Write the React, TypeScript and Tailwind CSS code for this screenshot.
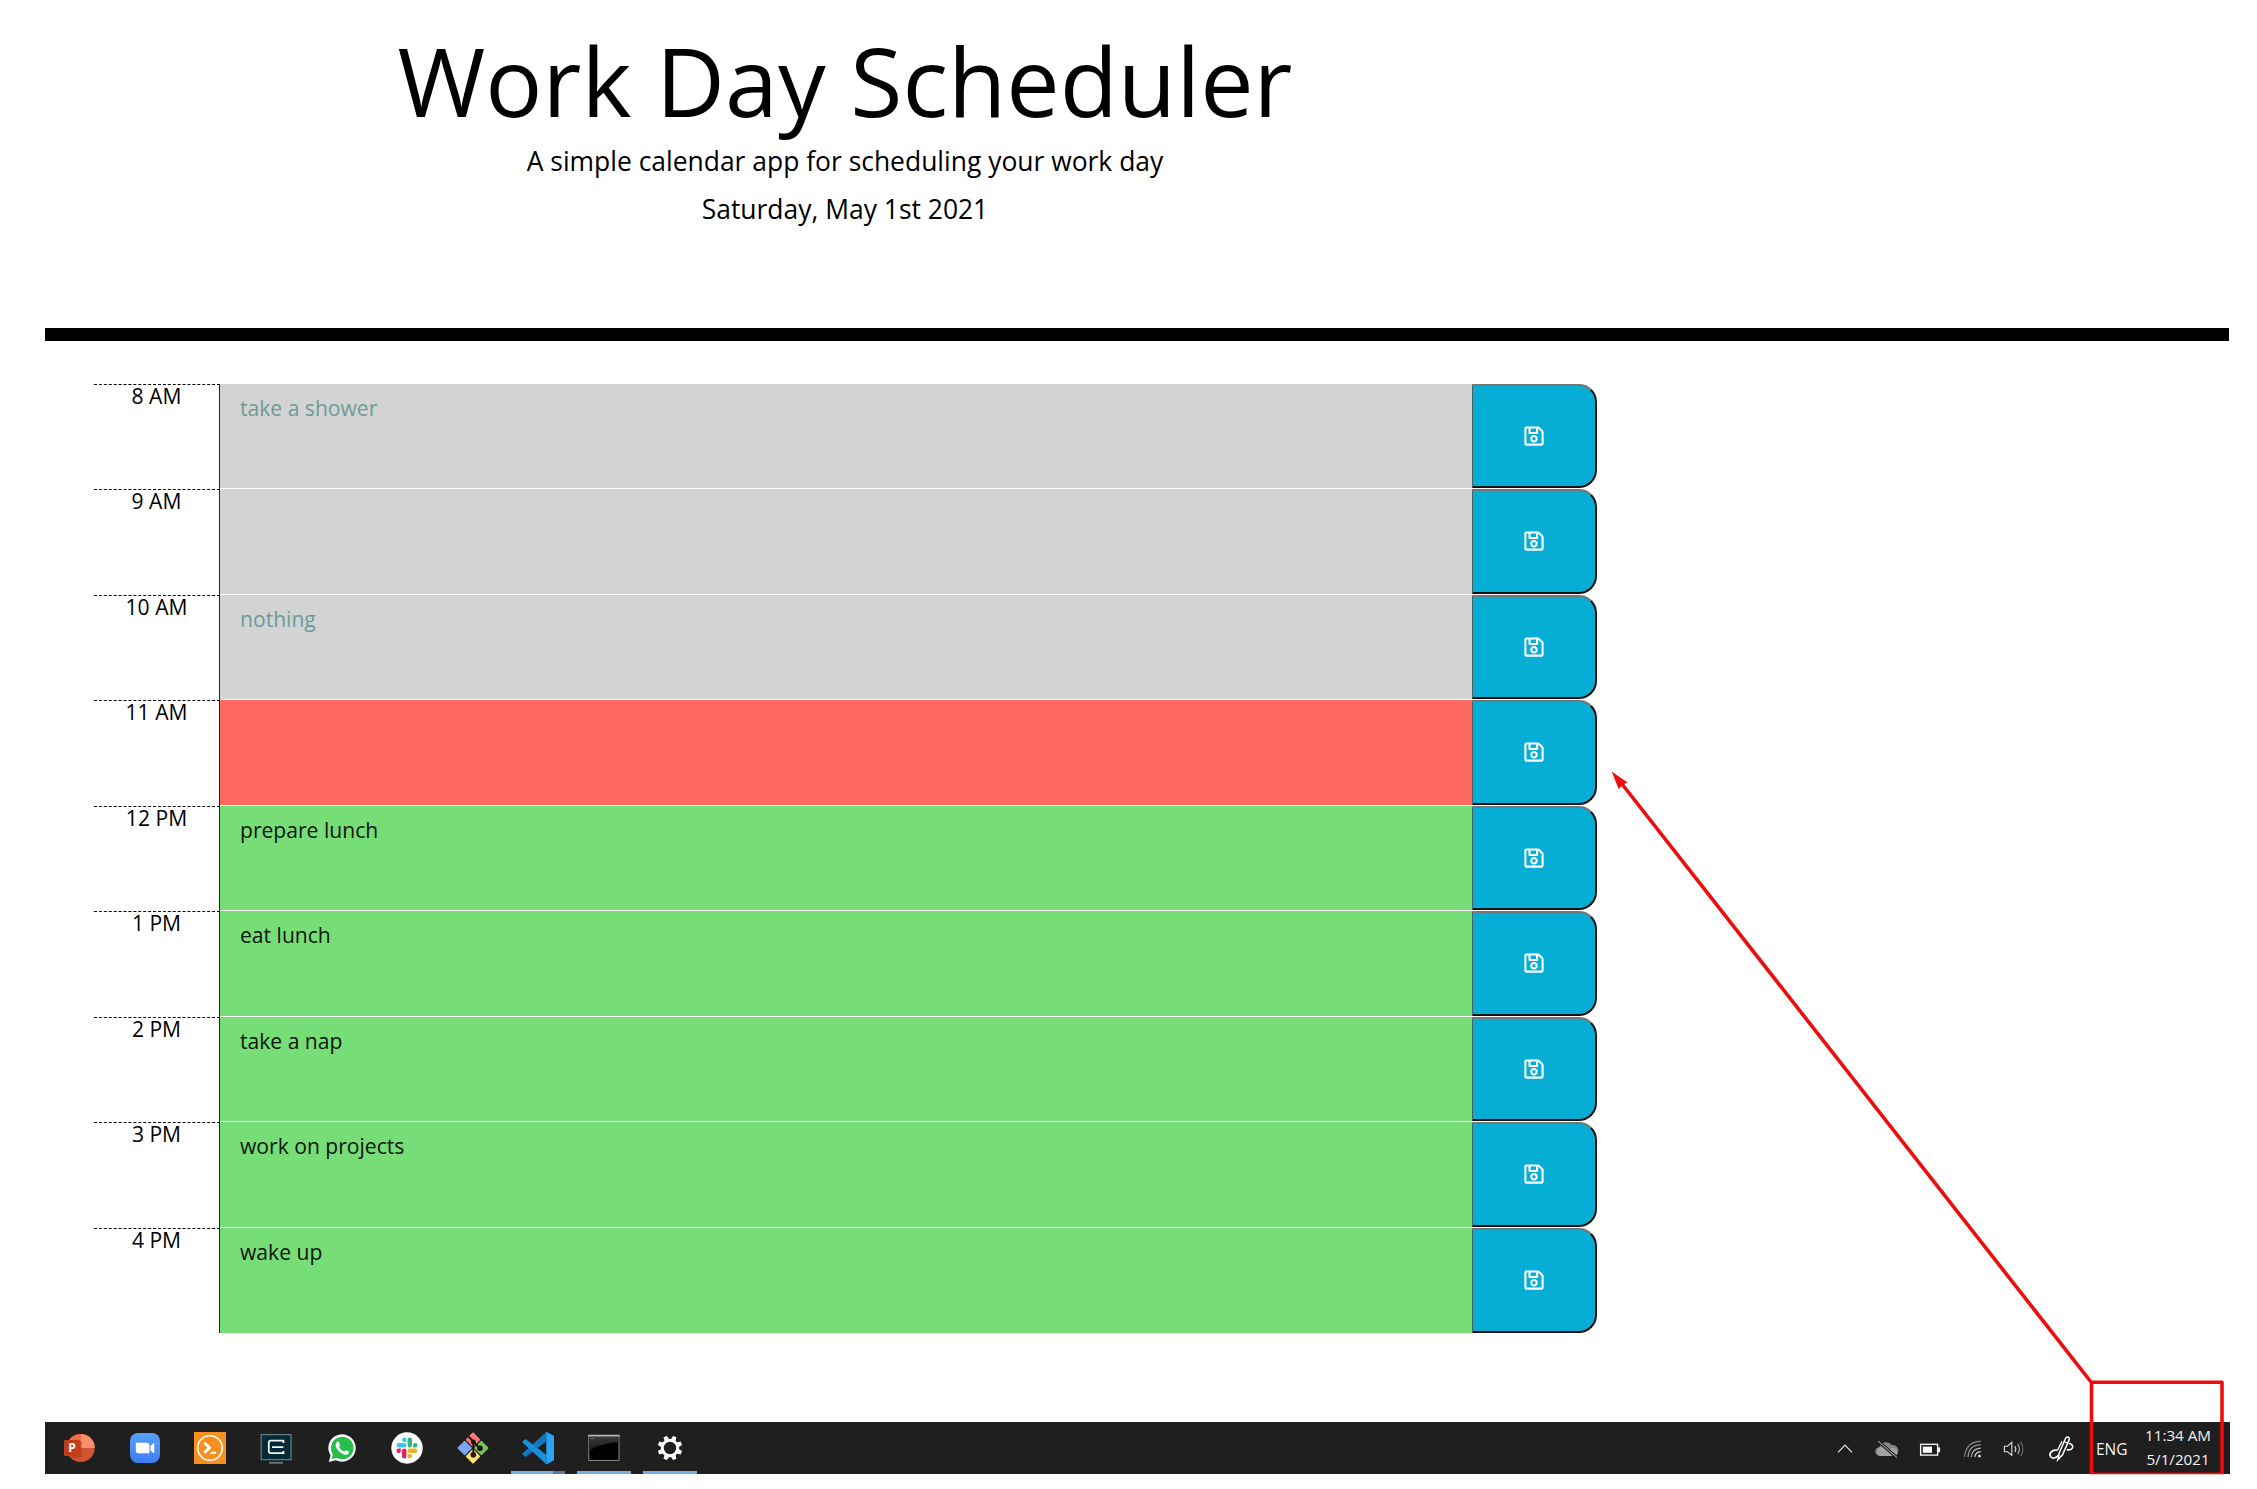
import React from "react";
import { FaRegSave } from "react-icons/fa";

type Slot = { hour: string; task: string; color: string };

const past = "bg-[#d3d3d3] text-[#6b9c98]";
const present = "bg-[#ff6961] text-black";
const future = "bg-[#77dd77] text-[#0b160b]";

const slots: Slot[] = [
  { hour: "8 AM", task: "take a shower", color: past },
  { hour: "9 AM", task: "", color: past },
  { hour: "10 AM", task: "nothing", color: past },
  { hour: "11 AM", task: "", color: present },
  { hour: "12 PM", task: "prepare lunch", color: future },
  { hour: "1 PM", task: "eat lunch", color: future },
  { hour: "2 PM", task: "take a nap", color: future },
  { hour: "3 PM", task: "work on projects", color: future },
  { hour: "4 PM", task: "wake up", color: future },
];

function Icon({ children }: { children: React.ReactNode }) {
  return (
    <svg viewBox="-20 -20 40 40" className="h-10 w-10 shrink-0" fill="none">
      {children}
    </svg>
  );
}

const PowerPoint = () => (
  <Icon>
    <circle cx="1.7" cy="0" r="14" fill="#d35230" />
    <path d="M1.7 -14A14 14 0 0 0 -12.3 0H1.7Z" fill="#ed6c47" />
    <path d="M1.7 -14A14 14 0 0 1 15.7 0H1.7Z" fill="#ff8f6b" />
    <rect x="-10" y="-7" width="13" height="17" rx="1" fill="#a83a20" opacity=".5" />
    <rect x="-15" y="-8" width="16" height="16" rx="1.2" fill="#c43e1c" />
    <text x="-7" y="4.3" textAnchor="middle" fontSize="12" fontWeight="700" fill="#fff" fontFamily="Open Sans, sans-serif">P</text>
  </Icon>
);

const Zoom = () => (
  <Icon>
    <defs>
      <linearGradient id="zoomBlue" x1="0" y1="0" x2="0" y2="1">
        <stop offset="0" stopColor="#58a0f8" />
        <stop offset="1" stopColor="#3f7df3" />
      </linearGradient>
    </defs>
    <rect x="-15" y="-15" width="30" height="30" rx="8" fill="url(#zoomBlue)" />
    <path d="M-9.2 -5.2H1.6A2.8 2.8 0 0 1 4.4 -2.4V5.2H-6.4A2.8 2.8 0 0 1 -9.2 2.4Z" fill="#fff" />
    <path d="M5.4 -2.2L8.6 -4.8Q9.3 -5.2 9.3 -4.2V4.6Q9.3 5.5 8.6 5L5.4 2.6Z" fill="#fff" />
  </Icon>
);

const OrangeTerminal = () => (
  <Icon>
    <rect x="-16" y="-16" width="32" height="32" fill="#f7901e" />
    <circle r="12.3" stroke="#fff" strokeWidth="1.6" />
    <path d="M-5.6 -5.2L-0.6 -0.3L-5.6 4.7" stroke="#fff" strokeWidth="2.9" />
    <path d="M0.6 4.8H6" stroke="#fff" strokeWidth="2.2" />
  </Icon>
);

const Monitor = () => (
  <Icon>
    <rect x="-14.8" y="-13.4" width="29.8" height="25" fill="#042a35" stroke="#5d7b83" strokeWidth="1.3" />
    <path d="M-7 14.8H7" stroke="#5d7b83" strokeWidth="1.8" />
    <path d="M7.4 -5V-7.3H-5.2Q-7.2 -7.3 -7.2 -5.3V3.2Q-7.2 5.2 -5.2 5.2H7.4V3M-4 -0.8H7.4" stroke="#f4f6f2" strokeWidth="1.8" />
  </Icon>
);

const WhatsApp = () => (
  <Icon>
    <path d="M-13.2 14L-11.5 7.4A13.7 13.7 0 1 1 -6.2 12.2Z" fill="#fff" />
    <path d="M-10.2 10.9L-9.2 6.2A11.3 11.3 0 1 1 -5.4 9.8Z" fill="#27bd49" />
    <path
      d="M-5.8 -5.1C-4.9 -6.6 -3.5 -6.8 -3 -5.7L-2 -3.4C-1.6 -2.5 -3.2 -1.6 -2.8 -0.9C-1.7 1.1 -0.3 2.5 1.8 3.5C2.5 3.8 3.4 1.9 4 2.2L6.7 3.5C7.7 4 6.6 6.4 4.6 6.7C0 7.3 -6.2 1.3 -6.4 -2.7Q-6.5 -4.1 -5.8 -5.1Z"
      fill="#fff"
    />
  </Icon>
);

const Slack = () => (
  <Icon>
    <circle r="15.7" fill="#fff" />
    <g transform="translate(-10.5 -10.5) scale(.875)">
      <path fill="#e01e5a" d="M5.042 15.165a2.528 2.528 0 0 1-2.52 2.523A2.528 2.528 0 0 1 0 15.165a2.527 2.527 0 0 1 2.522-2.52h2.52v2.52zM6.313 15.165a2.527 2.527 0 0 1 2.521-2.52 2.527 2.527 0 0 1 2.521 2.52v6.313A2.528 2.528 0 0 1 8.834 24a2.528 2.528 0 0 1-2.521-2.522v-6.313z" />
      <path fill="#36c5f0" d="M8.834 5.042a2.528 2.528 0 0 1-2.521-2.52A2.528 2.528 0 0 1 8.834 0a2.528 2.528 0 0 1 2.521 2.522v2.52H8.834zM8.834 6.313a2.528 2.528 0 0 1 2.521 2.521 2.528 2.528 0 0 1-2.521 2.521H2.522A2.528 2.528 0 0 1 0 8.834a2.528 2.528 0 0 1 2.522-2.521h6.312z" />
      <path fill="#2eb67d" d="M18.956 8.834a2.528 2.528 0 0 1 2.522-2.521A2.528 2.528 0 0 1 24 8.834a2.528 2.528 0 0 1-2.522 2.521h-2.522V8.834zM17.688 8.834a2.528 2.528 0 0 1-2.523 2.521 2.527 2.527 0 0 1-2.52-2.521V2.522A2.527 2.527 0 0 1 15.165 0a2.528 2.528 0 0 1 2.523 2.522v6.312z" />
      <path fill="#ecb22e" d="M15.165 18.956a2.528 2.528 0 0 1 2.523 2.522A2.528 2.528 0 0 1 15.165 24a2.527 2.527 0 0 1-2.52-2.522v-2.522h2.52zM15.165 17.688a2.527 2.527 0 0 1-2.52-2.523 2.526 2.526 0 0 1 2.52-2.52h6.313A2.527 2.527 0 0 1 24 15.165a2.528 2.528 0 0 1-2.522 2.523h-6.313z" />
    </g>
  </Icon>
);

const GitBash = () => (
  <Icon>
    <g transform="rotate(45)">
      <rect x="-11.2" y="-11.2" width="10.6" height="10.6" rx="1" fill="#f77b7b" />
      <rect x="0.6" y="-11.2" width="10.6" height="10.6" rx="1" fill="#76c558" />
      <rect x="-11.2" y="0.6" width="10.6" height="10.6" rx="1" fill="#7ba5f5" />
      <rect x="0.6" y="0.6" width="10.6" height="10.6" rx="1" fill="#fbe177" />
    </g>
    <path d="M-4.5 -11.5L0.3 -6.5V6M0.3 -6.5L6.5 0" stroke="#1b1616" strokeWidth="1.9" />
    <circle cx="0.3" cy="-6" r="2.4" fill="#1b1616" />
    <circle cx="0.3" cy="6.8" r="2.8" fill="#1b1616" />
    <circle cx="7" cy="0.3" r="2.8" fill="#1b1616" />
  </Icon>
);

const VSCode = () => (
  <Icon>
    <path d="M7.8 -15.6L-15.4 5.2Q-16 5.9 -15.4 6.6L-13.2 8.6Q-12.5 9.1 -11.7 8.6L8.2 -6.6Z" fill="#0f79bf" />
    <path d="M7.8 15.8L-15.4 -5.2Q-16 -5.9 -15.4 -6.6L-13.2 -8.6Q-12.5 -9.1 -11.7 -8.6L8.2 6.8Z" fill="#1b8fdb" />
    <path d="M7.4 -15.6Q8 -16.2 9 -15.8L14.8 -12.9Q16 -12.3 16 -11V11.2Q16 12.5 14.8 13L9 15.9Q8 16.2 7.4 15.6L8.3 14.6V-14.6Z" fill="#2ba5f3" />
  </Icon>
);

const CommandPrompt = () => (
  <Icon>
    <defs>
      <linearGradient id="cmdShine" x1="0" y1="0" x2="0" y2="1">
        <stop offset="0" stopColor="#3a3a3a" />
        <stop offset="1" stopColor="#161616" />
      </linearGradient>
    </defs>
    <rect x="-15.2" y="-12.6" width="30.2" height="25" fill="#000" stroke="#8c8c8c" strokeWidth="1" />
    <path d="M-14.7 -11H14.5V-6Q-6 -4 -14.7 3Z" fill="url(#cmdShine)" />
    <path d="M-15.7 -12.3H15.5" stroke="#b9b9b9" strokeWidth="1.8" />
    <path d="M-13.5 -9.5H-9" stroke="#8d8d8d" strokeWidth=".8" strokeDasharray="1 .6" />
  </Icon>
);

const Gear = () => (
  <Icon>
    {[22.5, 67.5, 112.5, 157.5, 202.5, 247.5, 292.5, 337.5].map((angle) => (
      <path key={angle} d="M-2.5 -7.5L-1.9 -12.3H1.9L2.5 -7.5Z" fill="#fff" transform={`rotate(${angle})`} />
    ))}
    <circle r="7.7" stroke="#fff" strokeWidth="3" />
  </Icon>
);

const apps = [
  { name: "powerpoint", icon: <PowerPoint />, line: "" },
  { name: "zoom", icon: <Zoom />, line: "" },
  { name: "terminal", icon: <OrangeTerminal />, line: "" },
  { name: "monitor", icon: <Monitor />, line: "" },
  { name: "whatsapp", icon: <WhatsApp />, line: "" },
  { name: "slack", icon: <Slack />, line: "" },
  { name: "git", icon: <GitBash />, line: "" },
  { name: "vscode", icon: <VSCode />, line: "bg-linear-to-r from-[#76aee4] from-78% to-[#56799c] to-78%" },
  { name: "cmd", icon: <CommandPrompt />, line: "bg-[#76aee4]" },
  { name: "settings", icon: <Gear />, line: "bg-[#76aee4]" },
];

function Tray() {
  return (
    <div className="flex h-full items-center text-[#f2f2f2]">
      <div className="flex w-[42px] justify-center">
        <Icon>
          <path d="M-7 4.4L0 -2.8L7 4.4" stroke="#e6e6e6" strokeWidth="1.2" />
        </Icon>
      </div>
      <div className="flex w-[42px] justify-center">
        <Icon>
          <path d="M-7 8A4.5 4.5 0 0 1 -7.5 -1A7.2 7.2 0 0 1 5 -3A5.6 5.6 0 0 1 7 8Z" fill="#858585" />
          <path d="M-6.5 8A4.6 4.6 0 0 1 -6 -1Q-2 -2 1 2Q7 -3 10.5 3Q11 8 7 8Z" fill="#a2a2a2" />
          <path d="M-9 -7L10 9.6" stroke="#1f1f1f" strokeWidth="3" />
          <path d="M-9 -7L10 9.6" stroke="#bdbdbd" strokeWidth="1" />
        </Icon>
      </div>
      <div className="flex w-[44px] justify-center">
        <Icon>
          <rect x="-9.4" y="-3.7" width="17" height="10.8" stroke="#fff" strokeWidth="1.3" />
          <rect x="-7.2" y="-1.4" width="9.2" height="6.2" fill="#fff" />
          <rect x="8.1" y="-0.6" width="2" height="4.8" fill="#fff" />
        </Icon>
      </div>
      <div className="flex w-[42px] justify-center">
        <Icon>
          <circle cx="6.5" cy="8" r="1.3" fill="#fff" />
          <path d="M1.8 9Q2.3 4.2 7.8 3.6" stroke="#d8d8d8" strokeWidth="1.1" />
          <path d="M-1.6 9Q-1 0.5 7.8 0.1" stroke="#b5b5b5" strokeWidth="1.1" />
          <path d="M-5 9Q-4.2 -3 7.8 -3.2" stroke="#a5a5a5" strokeWidth="1.1" />
          <path d="M-8.4 9Q-7 -6.4 7.8 -6.6" stroke="#8a8a8a" strokeWidth="1.1" />
        </Icon>
      </div>
      <div className="flex w-[40px] justify-center">
        <Icon>
          <path d="M-9.6 -1.8H-6.4L-2.2 -5.8V7.4L-6.4 3.8H-9.6Z" stroke="#e2e2e2" strokeWidth="1.1" />
          <path d="M0.8 -2Q2.8 1 0.8 4" stroke="#dcdcdc" strokeWidth="1.1" />
          <path d="M3.7 -4.2Q7.1 1 3.7 6.2" stroke="#b5b5b5" strokeWidth="1.1" />
          <path d="M6.6 -6.4Q11.2 1 6.6 8.4" stroke="#6e6e6e" strokeWidth="1.1" />
        </Icon>
      </div>
      <div className="flex w-[55px] justify-center">
        <Icon>
          <path d="M-5 2.4C-10 1.2 -13.8 6 -11 9C-8.5 11.4 -5.4 9.4 -3.4 7" stroke="#fff" strokeWidth="1.6" />
          <path d="M-4.2 11.8L-2.7 4.8L3.6 -9.7Q5.2 -12 6.9 -10.4Q7.7 -9.2 6.9 -7.6L0.5 6.8Z" stroke="#fff" strokeWidth="1.5" />
          <path d="M2 -6.5L5.8 -4.8" stroke="#fff" strokeWidth="1.2" />
          <path d="M0 -6.8L-4.6 2.4" stroke="#fff" strokeWidth="1.3" />
          <path d="M6.8 -4.6C9 -4.6 11.6 -2.2 10.4 0C9.4 2 6.4 2 4.8 1.6" stroke="#fff" strokeWidth="1.6" />
        </Icon>
      </div>
      <span className="w-[53px] pt-[2px] pl-[7px] text-[15.5px] leading-6">ENG</span>
      <div className="flex w-[72px] flex-col pb-[1px] text-center text-[15.2px] leading-[24.5px] whitespace-nowrap">
        <span>11:34 AM</span>
        <span>5/1/2021</span>
      </div>
    </div>
  );
}

export default function App() {
  return (
    <div className="relative h-[1489px] w-[2257px] overflow-hidden bg-white font-['Open_Sans',sans-serif] text-black">
      <header className="ml-[45px] flex h-[341px] w-[2184px] flex-col border-b-[13px] border-black pt-[22px]">
        <div className="flex w-[1600px] flex-col items-center text-center text-[26.45px] leading-[48px]">
          <h1 className="h-[115px] text-[95.1px] leading-[116px] whitespace-nowrap">Work Day Scheduler</h1>
          <p>A simple calendar app for scheduling your work day</p>
          <p>Saturday, May 1st 2021</p>
        </div>
      </header>

      <main className="mt-[42.6px] ml-[94px] h-[1038.4px] w-[1503.4px] text-[21.1px]">
        {slots.map((slot) => (
          <div key={slot.hour} className="group flex h-[105.5px]">
            <div className="w-[126px] border-t border-r border-t-black border-r-[#222] [border-top-style:dashed] text-center leading-[22px]">
              {slot.hour}
            </div>
            <div className={`mb-px w-[1252px] pt-[9px] pl-[20px] leading-[30px] group-last:mb-0 ${slot.color}`}>
              {slot.task}
            </div>
            <button className="mb-px flex flex-1 items-center justify-center rounded-r-[18px] border-t-2 border-r-2 border-b-2 border-l border-t-[#767676] border-r-[#111] border-b-[#111] border-l-[#4a6068] bg-[#06aed5] text-white group-last:mb-0">
              <FaRegSave className="h-[22px] w-[22px]" />
            </button>
          </div>
        ))}
      </main>

      <footer className="ml-[45px] flex h-[52px] w-[2185px] justify-between bg-[#1f1f1f]">
        <div className="flex">
          {apps.map((app) => (
            <div key={app.name} className="flex w-[65.6px] flex-col items-center pt-[6px] pl-[3px]">
              {app.icon}
              <div className={`mt-[3px] h-[3px] w-[54px] ${app.line}`} />
            </div>
          ))}
        </div>
        <div className="mr-[16px]">
          <Tray />
        </div>
      </footer>

      <svg className="pointer-events-none absolute top-0 left-0 h-[1489px] w-[2257px]" viewBox="0 0 2257 1489" fill="none">
        <path d="M2091 1382L1622 784" stroke="#ee0c0c" strokeWidth="3.6" />
        <path d="M1611.7 771.5L1627.6 782.6L1623 784.6L1618.6 789Z" fill="#ee0c0c" />
        <path d="M2091.5 1474V1382.3H2222V1474" stroke="#ee0c0c" strokeWidth="3.6" strokeLinejoin="round" />
        <path d="M2090 1473.3H2223.5" stroke="#ee0c0c" strokeWidth="1.8" />
      </svg>
    </div>
  );
}
